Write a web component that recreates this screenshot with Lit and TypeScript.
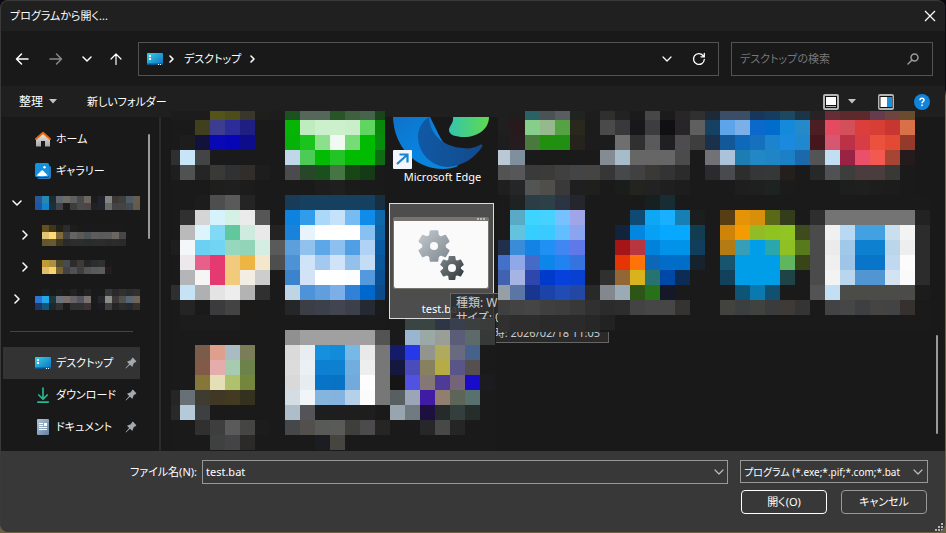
import { LitElement, html, svg, css, nothing } from "lit";
import { customElement, property } from "lit/decorators.js";

/* Pixelated previews: one string per row, one hex colour per cell, "." for an empty cell. */
const TOP_ROW: Record<string, string[]> = {
  a: [
    "1c1c1c 1c1c1c 54541a 4f4c1c 38372a 1e1e1b 1d1d1d",
    ". 40401f 3c3c90 2d2d99 1f1f83 . .",
    "1d1d1d 12123a 0808b4 0606b6 0d0d8c . .",
    "c8e4f7 434445 . . . . .",
    "505153 252525 393936 303132 302d2b 1d1d1d .",
    ". . 1e1e1c 1f1f1f 1c1c1c . .",
  ],
  b: [
    "1c5220 57665a 57665a 275528 3f5f3f 46634b 1a4419",
    "06b406 bfecbf cbf0cb cbf0cb c9efc9 60d560 08890a",
    "06b208 1ac41c 8ae08b f0faf0 76dc76 00bb02 068d0b",
    "bfd7e8 4dcb57 02bb02 23c426 00bb02 00bb02 0f6c13",
    "4b4b4d 284728 1c4f1e 447543 184616 153b16 .",
    ". . 1d1d1d 1f1f1f 1b1b1b . .",
  ],
  c: [
    "201f1f 1e1e1e 2b6065 4a5253 595d5f 1f2322 1d1d1d",
    "1f1f1f 281a1c 85cf8a 95b98d 54a244 28281c 1c1c1c",
    "1d1d1d 261c1f 49793c 21900f 219012 26231c 1c1c1c",
    "b9c8d4 7f8f9d . . . . .",
    "535354 575759 3a3a3b 3b3b39 404041 434446 454442",
    "1f1f1f 252628 535554 4f4e4b 393939 1f1f1f 1f1f1e",
  ],
  d: [
    "2f302d 222222 1b1b1b 474747 1b1b1b 272727 303030",
    "4a4a4a 3a383b 181719 3e3c3f 100f11 272528 5f5f5f",
    "1c1c1c 6f6f6f 313031 5a595c 201f21 4d4c4e 3e3e3e",
    "858b92 a7bccb 666666 666666 666666 4b4b4b .",
    "363636 47484b 414141 3b3935 333333 2b2b2b .",
    ". 1b1d1b 232320 222222 1f1f1f 1d1d1d .",
  ],
  e: [
    "1d2a35 3a4f65 3b4e66 17375a 163d60 1e4761 1c3546",
    "174163 5da5e8 7aafe8 0b69cb 006ccb 168ada 248aca",
    "1a304b 135898 0f69bb 1570be 1c83ce 1b8ade 2088cf",
    "707275 abc3da 1d7db0 2288c5 2085c7 1c80c7 1b68ab",
    "2b2b2d 484a4d 2d2d2d 363638 353837 241e1d .",
    ". . 1e1e1e 1e1f1f 1e2221 1b1b1b .",
  ],
  f: [
    "272223 652e36 5c2a2c 5c2a2c 673b4e 6e443e 694b30",
    "4b1e24 e44b5e d34f5a dc3f3b d83f34 c73630 d97148",
    "46161e d65870 bc3145 d83c44 ec513e e24a33 943a2b",
    "535456 c2def2 9a2244 eb506a f35951 a84433 251b1c",
    "272928 505155 3d3d3b 4b3d3e 4b3d3e 383835 .",
    ". . 1d1f1e 1f1f1f 1d1d1d 1c1c1c .",
  ],
};

const MIDDLE_ROW: Record<string, string[]> = {
  a: [
    ". 1c1c1c 4e4e4e 5a5a5a 242424 . .",
    "303030 d5d5d5 d5f3fc d5f0e4 ebebeb 565656 .",
    "bababa dcf4fb 80daf6 60c89c cdebde e9e9e9 232323",
    "f3f7fa 6bd0f2 72d4f5 97d7bd 91d4b8 d4eee4 5a5a5a",
    "ede8eb e95f8c e43a70 f1ca7d edb643 f5e7ca 4e4e4e",
    "b4b5b6 f5f5f5 e43a70 f1ca7a f2eee4 cdcdcd .",
    "c5e3f5 afb0b1 e5e4e5 eeeded b3b3b3 303030 .",
    "242424 . 3b3b3d 434343 1c1a19 . .",
    "1c1c1c 1c1c1c 1c1c1c 1c1c1c . . .",
  ],
  b: [
    "183c57 15405f 15405f 15405f 15405f 15405f 182f42",
    "0d82de 309cea aad8f9 c4e2fa 76bbf2 0f8be9 0f68a9",
    "1982db e8f4fc ffffff ffffff ffffff 87c1f1 0f63a5",
    "5c9fdd 91c2ee 5ba7e8 8dc0ef 509fe5 afd2f6 085ba2",
    "4d92d5 cfe3f9 a3c9f0 cfe4f9 93c1ec c5dcf5 09569b",
    "3b83cd d2e3f7 ffffff ffffff fbfdff 5499de 0b5093",
    "bdd5e5 4e92d9 619ede 7cafe7 3081d7 0067cc 0b4b8b",
    "242628 3b3f45 3b404b 42454f 3c404b 252932 1b1b1b",
    ". . . . . . .",
  ],
  c: [
    ". 1e2223 2c3e45 2c4047 2c3342 25262d .",
    ". 59aac4 3dd5ff 45d2ff 76c1ff a0a5e8 .",
    ". 63c3de 36cdff 3bcaff 62bfff 8ba4ef .",
    "222f4a 3a8cd9 1483e6 2090f4 4187f4 6078e8 .",
    "4371ca 8ea8e9 456ac7 0d86e9 1f83f0 3573df .",
    "4162ae a5b4e2 2d47ac 003acb 0541da 0841d1 .",
    "959fa5 5b76a5 183590 1b43a8 204cb3 2347a4 292929",
    "3f3f3f 434343 454545 3f3f3f 3d3d3d 383838 303030",
    "303030 2d2d2d 2d2d2d 2a2a2a 2a2a2a 2a2a2a 272727",
  ],
  d: [
    ". . . 181f21 182c33 . .",
    ". . 0e4a72 0ea7f4 1bb0ff 167fb3 1a1e1e",
    ". 12243c 0186e2 06a1f5 06a9ff 06a9ff 123c50",
    ". a51518 b83640 0082da 0292e9 0093ea 123e5e",
    ". e53505 ff7309 0d67b6 006dc9 006dc9 16222d",
    "30312f 936635 d9b31d 27736f 0048a5 0d2c55 .",
    "83888e 9aabb6 2c5516 26711a 151827 . .",
    "2b2b2b 2d2d2d 434343 464646 464646 353331 .",
    "222222 . . . . . .",
  ],
  e: [
    ". . . . . . .",
    ". 563d14 e59307 d8900b 596918 343d1b .",
    ". ce8408 f49a02 91bc26 8ec320 90c524 3d4b1d",
    ". b47b14 379eb8 009de8 2aa6ad 8fc124 587a1c",
    ". 19546e 009de8 009de8 009de8 60b65f 384519",
    ". 12425b 009de8 009de8 009de8 1f4447 .",
    ". . 0e5575 0979b0 125070 . .",
    ". 42423e 3b3f3f 404240 3a3b3d 3d3a38 353434",
    ". . . . . . .",
  ],
  f: [
    ". . . . . . . .",
    "2e2e2e 747474 747474 747474 747474 747474 747474 222222",
    "4b4b4b f0f0f0 b8d9f1 43a0e1 43a0e1 c9dfee f3f3f3 2c2c2c",
    "4b4b4b ebebeb 9fc8e9 0d80cf 0d80cf bbd6ea eeeeee 2c2c2c",
    "4b4b4b efefef 9ec4e7 0875c9 0875c9 c0d9f0 fcfcfc 2c2c2c",
    "4b4b4b f3f3f3 bad6ee 5196d3 5196d3 d3e3f2 fafafa 2c2c2c",
    "535355 c3dff4 4b4b48 4b4b48 4b4b48 4b4b48 4b4b48 1c1c1a",
    ". 434345 464646 3d3f42 464442 414345 36302e .",
    ". . . . . . . .",
  ],
};

const BOTTOM_ROW: Record<string, string[]> = {
  a: [
    ". . . . . . .",
    ". 7b5c4b df9f8d aabcc3 7b7d59 . .",
    ". 825b48 e4acaa a6cbb0 6b834b . .",
    ". 867638 e5deb6 afc26b 73863c . .",
    "677075 3d3c2e 403824 423b22 35311f . .",
    "b6c9d9 3e3f40 . . . . .",
    ". 303031 3e3e3e 5a5a5a 454543 1c1c1c .",
    ". . 3f4140 444446 2c2a29 . .",
  ],
  b: [
    "909090 a0a0a0 a0a0a0 a0a0a0 a0a0a0 a0a0a0 535353",
    "dadada e8edf1 1590df 138bdb 76b8e6 e9e9e9 777777",
    "dcdcdc ebf0f4 0d80d2 0e80d0 71aedd eeeeee 777777",
    "d9d9d9 e7ecef 0874c8 0873c5 71aadb fdfdfd 777777",
    "d5dde4 eff5f8 84b5df 84b3df b4d1e9 fbfbfb 777777",
    "aebdca 535458 1e1e1e 1e1e1e 1e1e1e 1e1e1e .",
    "464749 524f4c 585a58 5a5a58 3e3e3b 4b4b4d 262523",
    ". . 1c1d22 464540 . . .",
  ],
  c: [
    ". 3a4443 3a4443 2e3544 3a3f4d 3b3f3e 393c3b",
    ". 9ab5cf 9ba9a6 999e97 5b5c77 5c6a69 363938",
    "141b6b 2638e8 92958e b0aa5c 696a80 47628a .",
    "15183e 4b4cbb 87815f b7ab46 585589 554f50 .",
    "151515 5252e2 857773 4d3b97 756477 180bc9 1c1b20",
    "595e61 9ca5b8 3f1ca3 927e6f 5c6557 58716f .",
    "98a4ae 707b81 1d0f3f 242b2a 333e3d 262e2c .",
    ". . 272729 484848 252525 . .",
    ". . . . . . .",
  ],
};

const SIDE: Record<string, string[]> = {
  account: [
    "26589a 2787b0 1c2b30 62666f 6e6c66 605f60 484a4e 6c6560 1c1c1c 20232b 848484 3d3736 3f3f3c 4f5a65 665d50",
    "1c55a8 0f84c8 16323c 424346 1c1c1c 3d3d3d 484b4d 4d4546 202126 20232b 686b66 444244 444444 404a50 675a4b",
  ],
  folderOne: [
    "66501a 40361a 222019 2b2b2b 1d1d1d . . . . . . .",
    "e0c478 ffdb76 7f6c3a 434345 646464 5a5a57 4e5355 5d5d5f 5a5a5c 5c5c5c 6a6763 474747",
    "64562f 675930 3e361f 2a2a2a 2d2d2d 2d2d2a 292c2c 2c2c2c 2d2d2d 2a2a2a 2c2c2c 2a2a2a",
  ],
  folderTwo: [
    "bf9a36 aa9044 51492c 474b50 2f2b2a 3d3b3a 262626 2c2d2f 303030 .",
    "dfbe6b ffd166 766530 434345 505055 403e3d 545454 5a5a5a 5c5c5c 251c1c",
  ],
  drive: [
    ". 1b2022 . 1d1d1d . 222222 . 222222 . . 36373a 2a2a2a 32312e 2b2c2d 322f2c",
    "2b74d4 23a7e7 1c363b 6c727b 776d6a 666268 52565c 7a7270 1b1b1b 24262c 8c8c89 3e3838 50504c 586672 6f6455",
    "1d3866 12557a 1a2a2e 313131 1b1b1b 303030 2e3032 3a3432 . 1b1c22 40403f 252525 2e2b2b 26292c 36302b",
  ],
};

interface Crop {
  x?: number;
  y?: number;
  w?: number;
  h?: number;
  left?: Record<number, string>;
}

/* Draws a cell grid; the crop cuts the outer cells where the blurred region ends. */
function mosaic(rows: string[], size: number, crop: Crop = {}) {
  const columns = rows[0].split(" ").length;
  const x = crop.x ?? 0;
  const y = crop.y ?? 0;
  const w = crop.w ?? columns * size - x;
  const h = crop.h ?? rows.length * size - y;
  return html`<svg class="mosaic" aria-hidden="true" width=${w} height=${h}
    viewBox="${x} ${y} ${w} ${h}" shape-rendering="crispEdges">
    <rect x=${x} y=${y} width=${w} height=${h} fill="#1a1a1a"></rect>
    ${rows.map((row, r) => row.split(" ").map((c, i) => c === "." ? nothing
      : svg`<rect x=${i * size} y=${r * size} width=${size} height=${size} fill="#${c}"></rect>`))}
    ${Object.entries(crop.left ?? {}).map(([r, c]) =>
      svg`<rect x=${x} y=${Number(r) * size} width=${-x} height=${size} fill="#${c}"></rect>`)}
  </svg>`;
}

const chevron = (dir: "down" | "right", size = 10, width = 1.5) => html`
  <svg width=${size} height=${size} viewBox="0 0 10 10" fill="none" stroke="currentColor"
    stroke-width=${width} stroke-linecap="round" stroke-linejoin="round" aria-hidden="true">
    <path d=${dir === "down" ? "M1 3L5 7L9 3" : "M3 1L7 5L3 9"}></path>
  </svg>`;

const crumbChevron = html`<svg width="9" height="10" viewBox="0 0 9 10" fill="none" stroke="currentColor"
  stroke-width="1.6" stroke-linecap="round" stroke-linejoin="round" aria-hidden="true"><path d="M3 2L6 5L3 8"/></svg>`;

const triangle = html`<svg width="8" height="5" viewBox="0 0 8 5" aria-hidden="true"><path d="M0 0H8L4 4.6Z" fill="#c4c4c4"/></svg>`;

const desktopIcon = html`<svg width="16" height="16" viewBox="0 0 16 16" aria-hidden="true">
  <defs><linearGradient id="dk" x1="0" y1="0" x2="1" y2="1"><stop offset="0" stop-color="#35d5e6"/><stop offset="1" stop-color="#0d6cc0"/></linearGradient></defs>
  <rect y="2" width="16" height="12" rx="1" fill="url(#dk)"/><path d="M0 12.500H16V13Q16 14 15 14H1Q0 14 0 13Z" fill="#0a4f86"/>
  <path d="M2 4H4V6H2ZM2 7H4V9H2ZM11 13H12V14H11ZM13 13H14V14H13Z" fill="#fff"/></svg>`;
const homeIcon = html`<svg width="16" height="16" viewBox="0 0 16 16" aria-hidden="true">
  <defs><linearGradient id="hm" x1="0" y1="0" x2="0" y2="1"><stop offset="0" stop-color="#eee"/><stop offset="1" stop-color="#a5a5a5"/></linearGradient></defs>
  <path d="M1 7.5L8 1.5L15 7.5V15Q15 15.5 14.4 15.5H10V10H6V15.5H1.6Q1 15.5 1 15Z" fill="url(#hm)"/>
  <path d="M1 8L8 1.7L15 8" fill="none" stroke="#e8660c" stroke-width="2" stroke-linecap="round" stroke-linejoin="round"/></svg>`;
const galleryIcon = html`<svg width="16" height="16" viewBox="0 0 16 16" aria-hidden="true">
  <path d="M14 2.5Q16 3 16 4.5V13.5Q16 16 13.5 16H4.5Q2.500 16 2 14.500H13Q14 14.500 14 13Z" fill="#3078b8"/>
  <rect width="14" height="14" rx="1.500" fill="#1490df"/><path d="M1.500 12.500L6.500 7.500Q7.200 6.900 7.900 7.500L12.800 12.500Q10 13.200 7 13.200Q4 13.200 1.500 12.500Z" fill="#fff"/>
  <circle cx="9.500" cy="4.200" r="1.200" fill="#fff"/></svg>`;
const downloadIcon = html`<svg width="16" height="16" viewBox="0 0 16 16" fill="none" stroke="#25b891" stroke-width="1.700" stroke-linecap="round" stroke-linejoin="round" aria-hidden="true">
  <path d="M8 1V12M3.800 8L8 12.200L12.200 8M2.800 15.100H13.300"/></svg>`;
const documentIcon = html`<svg width="16" height="16" viewBox="0 0 16 16" aria-hidden="true">
  <defs><linearGradient id="dc" x1="0" y1="0" x2="1" y2="1"><stop offset="0" stop-color="#b0c5dc"/><stop offset="1" stop-color="#66809f"/></linearGradient></defs>
  <rect x="2" width="12" height="16" rx="1" fill="url(#dc)"/><path d="M4 4H8V5H4ZM4 6H8V7H4ZM9 4H12V7H9ZM4 8H12V9H4ZM4 10H12V11H4Z" fill="#fff"/></svg>`;
const pinIcon = html`<svg class="pin" width="12" height="12" viewBox="0 0 12 12" aria-hidden="true">
  <path d="M7.300 .8Q7.600 .5 8 .8L11.100 4Q11.500 4.400 11.100 4.800L8.700 6.200L7.500 9.500Q7.300 10 6.900 9.600L5 7.700L1.200 11.200L.5 11.500L.8 10.700L4.200 7L2.400 5.200Q2 4.700 2.500 4.500L5.800 3.300Z" fill="#a3a9ad"/></svg>`;

const edgeIcon = html`<svg class="edge" width="105" height="52" viewBox="0 0 105 52" aria-hidden="true">
  <defs>
    <linearGradient id="e1" x1="0" y1="0" x2="1" y2="1"><stop offset="0" stop-color="#0f72c8"/><stop offset=".5" stop-color="#0882df"/><stop offset="1" stop-color="#0f86d8"/></linearGradient>
    <linearGradient id="e2" x1="0" y1="0" x2="1" y2="0"><stop offset="0" stop-color="#1059a5"/><stop offset="1" stop-color="#134a8b"/></linearGradient>
    <linearGradient id="e3" x1="0" y1="0" x2="1" y2="0"><stop offset="0" stop-color="#33c6b0"/><stop offset="1" stop-color="#61d94c"/></linearGradient>
  </defs>
  <path d="M3 0C4 30 25 52 53 52C59 52 64 51 68 49L50 20L40 0Z" fill="url(#e1)"/>
  <path d="M39 0C31 5 28 13 28 20C28 37 43 50 58 50C74 49 85 40 92 30C93 28 92 27 90 28C84 31 79 32 73 31C56 30 40 20 39 0Z" fill="url(#e2)"/>
  <path d="M63 0C64 6 59 9 59 13C59 18 66 20 74 20C88 20 99 12 99 0Z" fill="url(#e3)"/>
  <rect x="3" y="33" width="19" height="19" rx="1" fill="#f3f6fa"/>
  <path d="M7 47L17 38M9.500 37.500H17.500V45.500" fill="none" stroke="#1686d4" stroke-width="2.200"/>
</svg>`;

/* A six-toothed wheel: each tooth is four points, joined by the body between them. */
function gear(cx: number, cy: number, r: number, hole: number, fill: string) {
  const points: string[] = [];
  for (let tooth = 0; tooth < 6; tooth++) {
    for (const [offset, radius] of [[-22, 0.72], [-13, 1], [13, 1], [22, 0.72]]) {
      const angle = ((tooth * 60 + offset - 90) * Math.PI) / 180;
      points.push(`${(Math.cos(angle) * r * radius).toFixed(2)},${(Math.sin(angle) * r * radius).toFixed(2)}`);
    }
  }
  return svg`<g transform="translate(${cx} ${cy})">
    <polygon points=${points.join(" ")} fill=${fill} stroke=${fill} stroke-width="1.500" stroke-linejoin="round"></polygon>
    <circle r=${hole} fill="#fafafa"></circle></g>`;
}

const batIcon = html`<svg width="96" height="72" viewBox="0 0 96 72" aria-hidden="true">
  <defs>
    <linearGradient id="g1" gradientUnits="userSpaceOnUse" x1="-12" y1="-12" x2="12" y2="12"><stop offset="0" stop-color="#bcc3c9"/><stop offset="1" stop-color="#858e96"/></linearGradient>
    <linearGradient id="g2" gradientUnits="userSpaceOnUse" x1="-9" y1="-9" x2="9" y2="9"><stop offset="0" stop-color="#777f84"/><stop offset="1" stop-color="#383d40"/></linearGradient>
  </defs>
  <rect width="96" height="72" rx="2" fill="#77746f"/><path d="M1 4H95V69Q95 71 93 71H3Q1 71 1 69Z" fill="#fafafa"/>
  <path d="M84 1H86V3H84ZM87 1H89V3H87ZM90 1H92V3H90Z" fill="#bbb"/>
  ${gear(41, 29, 15.5, 4, "url(#g1)")}${gear(59, 51, 11.5, 4, "url(#g2)")}
</svg>`;

@customElement("file-tile")
class FileTile extends LitElement {
  @property() label = "";
  @property({ type: Boolean, reflect: true }) selected = false;

  static styles = css`
    :host { display: flex; flex-direction: column; align-items: center; }
    .label { font-size: 11px; line-height: 16px; color: #fff; white-space: nowrap; }
    :host([selected]) { box-sizing: border-box; background: #4d4d4d; border: 1px solid #dcdcdc; }
  `;

  render() {
    return html`<slot></slot><span class="label">${this.label}</span>`;
  }
}

@customElement("app-root")
class AppRoot extends LitElement {
  static styles = css`
    :host {
      display: flex; flex-direction: column; box-sizing: border-box; min-height: 100vh; padding: 0 1px 1px 0;
      background: linear-gradient(#0c0b14 90px, #77704a 96px, #6a6046);
      font-family: "Noto Sans", "Noto Sans CJK JP", sans-serif; font-size: 11px; line-height: 16px;
      font-feature-settings: "palt"; color: #fff;
    }
    svg { display: block; flex: none; }
    button, input, select { font: inherit; font-feature-settings: inherit; color: inherit; background: none; border: 0; padding: 0; margin: 0; border-radius: 0; outline: 0; }
    button { display: flex; align-items: center; justify-content: center; white-space: nowrap; }
    .dialog { box-sizing: border-box; flex: 1; display: flex; flex-direction: column; background: #383838;
      border: solid #3a3a3a; border-width: 1px 0 0 1px; border-radius: 8px; overflow: hidden; }
    .title { display: flex; align-items: center; justify-content: space-between; height: 30px; padding: 0 9px; background: #202020; }
    .title h1 { margin: 0; font-size: 11px; font-weight: 400; }
    .nav { display: flex; align-items: center; height: 55px; background: #191919; padding: 0 12px 0 13px; gap: 12px; }
    .history { display: flex; align-items: center; gap: 18px; width: 112px; }
    .dim { color: #8a8a8a; }
    .address, .search { box-sizing: border-box; height: 34px; border: 1px solid #535353; display: flex; align-items: center; }
    .address { flex: 1; min-width: 0; padding: 0 12px 0 8px; gap: 4px; }
    .address .crumb { padding: 0 3px 0 4px; }
    .address .tail { margin-left: auto; display: flex; align-items: center; gap: 20px; }
    .search { width: 202px; padding: 0 13px 0 8px; gap: 8px; }
    .search input { flex: 1; min-width: 0; }
    .search input::placeholder { color: #777; opacity: 1; }
    .tools { display: flex; align-items: center; height: 31px; padding: 0 15px 0 18px; background: #1f1f1f; }
    .tools button { gap: 6px; }
    .tools .organize { margin-right: 30px; font-size: 12px; }
    .view { margin-left: auto; }
    .tools .view { gap: 9px; }
    .preview { margin: 0 20px 0 22px; }
    .help { width: 16px; height: 16px; }
    .main { display: flex; background: #191919; min-height: 334px; }
    .side { box-sizing: border-box; flex: none; display: flex; width: 160px; padding-left: 2px; border-right: 2px solid #2b2b2b; }
    .tree { flex: none; width: 137px; margin: 6px 0 0; padding: 0; list-style: none; }
    .item { box-sizing: border-box; display: flex; align-items: center; height: 32px; padding-left: 9px; }
    .item.current { background: #333; }
    .item a { flex: 1; display: flex; align-items: center; gap: 5px; color: inherit; text-decoration: none; white-space: nowrap; }
    .item .twist { width: 10px; margin-right: 13px; }
    .item.nested { padding-left: 17px; }
    .item.nested .twist { margin-right: 12px; }
    .pin { margin: 0 3px 0 auto; }
    .divider { padding: 0 7px 0 7px; }
    .divider hr { width: 100%; margin: 0; border: 0; border-top: 1px solid #444; }
    .thumb { width: 2px; border-radius: 1px; background: #9a9a9a; }
    .side .thumb { height: 105px; margin: 17px 0 0 8px; }
    .files { flex: 1; position: relative; z-index: 1; display: flex; justify-content: space-between; min-width: 0; }
    .rows { display: grid; grid-template-columns: repeat(7, 105px); grid-template-rows: 84px 135px 120px; margin: -6px 0 0 19px; }
    .cell { position: relative; min-width: 0; }
    .cover { z-index: 2; }
    .outset { margin-left: -9px; }
    .inset { margin-left: 3px; }
    .raised { margin-top: -11px; }
    .edge-tile { padding-top: 6px; }
    .bat-tile { width: 105px; height: 116px; margin: 8px 0 0 -1px; }
    .bat-art { padding: 13px 1px 12px 0; }
    .tip { position: absolute; left: 60px; top: 98px; z-index: 1; box-sizing: border-box; width: 159px; height: 50px; padding: 1px 5px;
      background: #2c2c2ce0; border: 1px solid #666; color: #ccc; font-size: 12px; line-height: 15px; white-space: nowrap; }
    .tip p { margin: 0; }
    .tip .date { padding-right: 3px; text-align: right; font-size: 11px; }
    .files > .thumb { height: 99px; margin: 218px 7px 0 0; }
    .footer { flex: 1; display: grid; grid-template-columns: 196px 1fr 188px; grid-template-rows: 24px 24px; column-gap: 12px; row-gap: 6px;
      align-content: start; padding: 9px 17px 0 0; position: relative; }
    .footer label { text-align: right; line-height: 24px; }
    .name { display: flex; align-items: center; margin-left: -7px; box-sizing: border-box; height: 24px; border: 1px solid #989898; padding: 0 3px; }
    .name input { flex: 1; min-width: 0; }
    .name svg, .kind svg { color: #bbb; }
    .kind { display: flex; align-items: center; box-sizing: border-box; height: 23px; border: 1px solid #989898; padding: 0 4px 0 3px; }
    .kind select { appearance: none; flex: 1; min-width: 0; overflow: hidden; text-overflow: clip; font-size: 10px; }
    .actions { grid-column: 3; display: flex; gap: 14px; padding-left: 1px; }
    .actions button { box-sizing: border-box; width: 86px; height: 24px; border: 1px solid #989898; border-radius: 4px; }
    .actions .primary { border-color: #fff; }
    .grip { position: absolute; right: 2px; bottom: 1px; }
  `;

  private link(icon: unknown, text: string, pinned = false, current = false) {
    return html`<li class="item ${current ? "current" : ""}"><span class="twist"></span>
      <a href="#">${icon}${text}${pinned ? pinIcon : nothing}</a></li>`;
  }

  private blurred(rows: string[], open: boolean, nested = false) {
    return html`<li class="item ${nested ? "nested" : ""}">
      <button class="twist" aria-label="展開">${chevron(open ? "down" : "right")}</button>${mosaic(rows, 7)}</li>`;
  }

  render() {
    const T = TOP_ROW, M = MIDDLE_ROW, B = BOTTOM_ROW;
    return html`
      <div class="dialog">
        <header class="title"><h1>プログラムから開く...</h1>
          <button aria-label="閉じる"><svg width="12" height="12" viewBox="0 0 12 12" stroke="#fff" stroke-width="1.200"><path d="M1 1L11 11M11 1L1 11"/></svg></button>
        </header>
        <nav class="nav">
          <div class="history">
            <button aria-label="戻る"><svg width="16" height="16" viewBox="0 0 16 16" fill="none" stroke="currentColor" stroke-width="1.500" stroke-linecap="round" stroke-linejoin="round"><path d="M14 8H3M7.500 3L2.500 8L7.500 13"/></svg></button>
            <button class="dim" aria-label="進む"><svg width="16" height="16" viewBox="0 0 16 16" fill="none" stroke="currentColor" stroke-width="1.500" stroke-linecap="round" stroke-linejoin="round"><path d="M2 8H13M8.500 3L13.500 8L8.500 13"/></svg></button>
            <button aria-label="履歴">${chevron("down")}</button>
            <button aria-label="上へ"><svg width="12" height="16" viewBox="0 0 12 16" fill="none" stroke="currentColor" stroke-width="1.200" stroke-linecap="round" stroke-linejoin="round"><path d="M6 13.500V3M1 8L6 3L11 8"/></svg></button>
          </div>
          <div class="address">
            ${desktopIcon}${crumbChevron}<button class="crumb">デスクトップ</button>${crumbChevron}
            <div class="tail">
              <button aria-label="以前の場所">${chevron("down", 10, 1.2)}</button>
              <button aria-label="更新"><svg width="14" height="14" viewBox="0 0 14 14" fill="none" stroke="currentColor" stroke-width="1.300" stroke-linecap="round"><path d="M12.300 7.500A5.400 5.400 0 1 1 11 3.500L12 4.600M12.300 1.500V4.800H9"/></svg></button>
            </div>
          </div>
          <div class="search"><input type="search" placeholder="デスクトップの検索" aria-label="デスクトップの検索" />
            <svg width="12" height="12" viewBox="0 0 12 12" fill="none" stroke="#999" stroke-width="1.500" stroke-linecap="round"><circle cx="7.500" cy="4.500" r="3.500"/><path d="M5 7L1 11"/></svg></div>
        </nav>
        <div class="tools">
          <button class="organize">整理 ${triangle}</button><button>新しいフォルダー</button>
          <button class="view" aria-label="表示"><svg width="16" height="16" viewBox="0 0 16 16"><rect width="16" height="16" rx="2" fill="#b4b4b4"/><path d="M2 2H14V14H2Z" fill="#111"/><path d="M3 3H13V11H3Z" fill="#fff"/><path d="M3 12H13V13H3Z" fill="#b4b4b4"/></svg>${triangle}</button>
          <button class="preview" aria-label="プレビュー"><svg width="16" height="16" viewBox="0 0 16 16"><rect width="16" height="16" rx="2" fill="#b4b4b4"/><path d="M1.500 2H14.500V14H1.500Z" fill="#111"/><path d="M2.500 3H9V13H2.500Z" fill="#fff"/><path d="M9 3H14V13H9Z" fill="#1591dd"/></svg></button>
          <button class="help" aria-label="ヘルプ"><svg width="16" height="16" viewBox="0 0 16 16"><circle cx="8" cy="8" r="8" fill="#1083dc"/><path d="M6 6.200Q6 4.200 8 4.200T10 6Q10 6.900 9 7.600T8 9.200" fill="none" stroke="#fff" stroke-width="1.500"/><rect x="7.200" y="10.500" width="1.600" height="1.600" fill="#fff"/></svg></button>
        </div>
        <div class="main">
          <aside class="side">
            <ul class="tree">
              ${this.link(homeIcon, "ホーム")}
              ${this.link(galleryIcon, "ギャラリー")}
              ${this.blurred(SIDE.account, true)}
              ${this.blurred(SIDE.folderOne, false, true)}
              ${this.blurred(SIDE.folderTwo, false, true)}
              ${this.blurred(SIDE.drive, false)}
              <li class="item divider"><hr /></li>
              ${this.link(desktopIcon, "デスクトップ", true, true)}
              ${this.link(downloadIcon, "ダウンロード", true)}
              ${this.link(documentIcon, "ドキュメント", true)}
            </ul>
            <div class="thumb"></div>
          </aside>
          <section class="files">
            <div class="rows">
              <div class="cell outset">${mosaic(T.a, 15, { x: -9, y: 6, w: 114, left: { 0: "1c1c1c", 3: "2e2f31", 4: "1e1e1e" } })}</div>
              <div class="cell">${mosaic(T.b, 15, { y: 6, w: 100 })}</div>
              <file-tile class="edge-tile" label="Microsoft Edge">${edgeIcon}</file-tile>
              <div class="cell inset">${mosaic(T.c, 15, { x: 3, y: 6 })}</div>
              <div class="cell">${mosaic(T.d, 15, { y: 6 })}</div>
              <div class="cell">${mosaic(T.e, 15, { y: 6 })}</div>
              <div class="cell">${mosaic(T.f, 15, { y: 6 })}</div>

              <div class="cell outset">${mosaic(M.a, 15, { x: -9, w: 114, left: { 3: "1e1e1e", 6: "2e2f31" } })}</div>
              <div class="cell">${mosaic(M.b, 15, { w: 100 })}</div>
              <div class="cell">
                <file-tile class="bat-tile" selected label="test.bat"><div class="bat-art">${batIcon}</div></file-tile>
                <div class="tip" role="tooltip"><p>種類: W</p><p>サイズ: 0</p><p class="date">時: 2026/02/18 11:05</p></div>
              </div>
              <div class="cell inset cover">${mosaic([...M.c, M.c[8]], 15, { x: 3, h: 137 })}</div>
              <div class="cell cover">${mosaic(M.d, 15, { h: 137 })}</div>
              <div class="cell">${mosaic(M.e, 15)}</div>
              <div class="cell">${mosaic(M.f, 15)}</div>

              <div class="cell outset">${mosaic(B.a, 15, { x: -9, w: 114, left: { 4: "252525", 5: "292929" } })}</div>
              <div class="cell">${mosaic(B.b, 15)}</div>
              <div class="cell cover raised">${mosaic(B.c, 15, { y: 4, w: 106 })}</div>
            </div>
            <div class="thumb"></div>
          </section>
        </div>
        <footer class="footer">
          <label for="name">ファイル名(N):</label>
          <div class="name"><input id="name" type="text" value="test.bat" />${chevron("down", 10, 1.2)}</div>
          <div class="kind"><select aria-label="ファイルの種類"><option>プログラム (*.exe;*.pif;*.com;*.bat</option></select>${chevron("down", 10, 1.2)}</div>
          <div class="actions"><button class="primary">開く(O)</button><button>キャンセル</button></div>
          <svg class="grip" width="8" height="8" viewBox="0 0 8 8" aria-hidden="true"><path d="M6 0H8V2H6ZM3 3H5V5H3ZM6 3H8V5H6ZM0 6H2V8H0ZM3 6H5V8H3ZM6 6H8V8H6Z" fill="#b5b5b5"/></svg>
        </footer>
      </div>
    `;
  }
}
